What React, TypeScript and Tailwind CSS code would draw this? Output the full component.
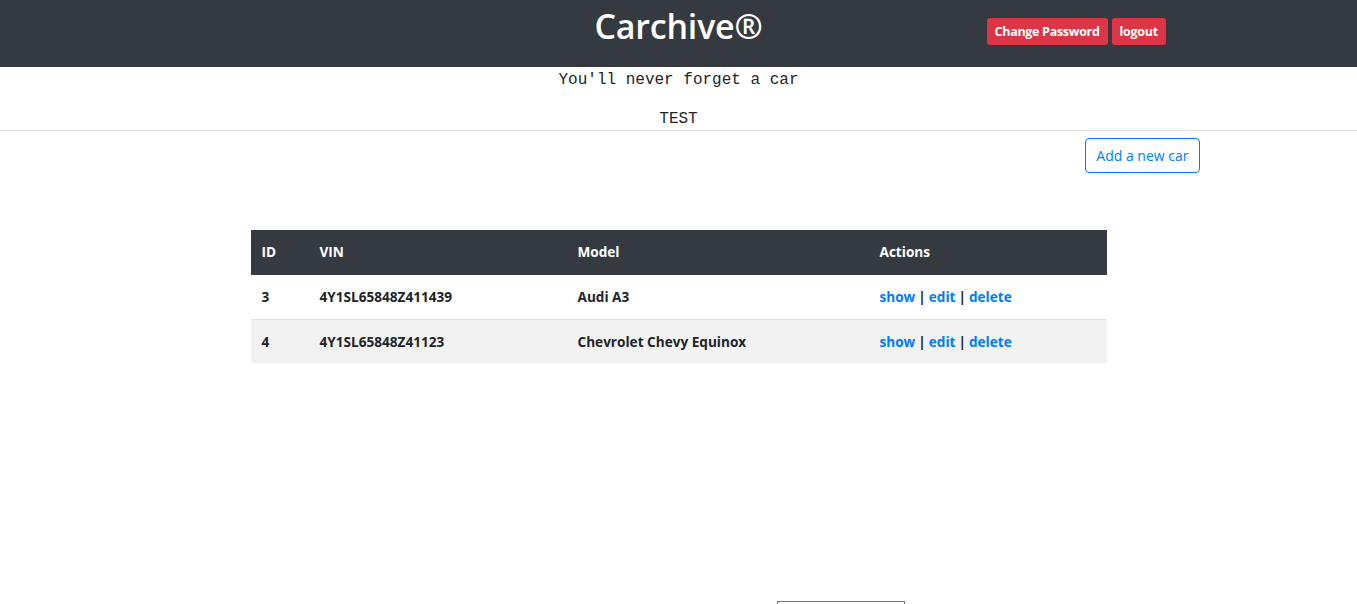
const cars = [
  { id: 3, vin: "4Y1SL65848Z411439", model: "Audi A3" },
  { id: 4, vin: "4Y1SL65848Z41123", model: "Chevrolet Chevy Equinox" },
]

function App() {
  return (
    <div className="min-h-screen bg-white font-['Open_Sans',sans-serif] text-[#212529]">
      <header className="grid h-[67px] grid-cols-[1fr_auto_1fr] bg-[#343a40]">
        <div></div>
        <h1 className="pt-[1px] text-[34px] font-semibold leading-[50px] tracking-[-0.2px] text-white">Carchive®</h1>
        <div className="flex items-start gap-[4px] pl-[224px] pt-[18px]">
          <button className="h-[27px] rounded-[3px] bg-[#dc3545] px-[8px] text-[12.5px] font-bold leading-[27px] tracking-[-0.3px] text-white">
            Change Password
          </button>
          <button className="h-[27px] rounded-[3px] bg-[#dc3545] px-[8px] text-[12.5px] font-bold leading-[27px] tracking-[-0.3px] text-white">
            logout
          </button>
        </div>
      </header>

      <div className="border-b border-[#dee2e6] pb-[1px] text-center font-['Liberation_Mono',monospace] text-[16px] text-[#212529]">
        <p className="pt-[3px] leading-[20px]">You'll never forget a car</p>
        <p className="mt-[19px] leading-[20px]">TEST</p>
      </div>

      <div className="mx-auto w-[856px]">
        <div className="flex justify-end pt-[7px]">
          <button className="-mr-[93px] h-[35px] rounded-[4px] border border-[#007bff] px-[10px] text-[14px] text-[#007bff]">
            Add a new car
          </button>
        </div>

        <table className="mt-[57px] w-full border-collapse text-left text-[13.6px] font-bold">
          <thead>
            <tr className="h-[45px] bg-[#343a40] text-white">
              <th className="w-[58px] pl-[11px]">ID</th>
              <th className="w-[258px] pl-[11px]">VIN</th>
              <th className="w-[302px] pl-[11px]">Model</th>
              <th className="pl-[11px]">Actions</th>
            </tr>
          </thead>
          <tbody>
            {cars.map((car, i) => (
              <tr
                key={car.id}
                className={i % 2 === 1 ? "h-[44px] border-t border-[#dee2e6] bg-[#f2f2f2]" : "h-[44px] bg-white"}
              >
                <td className="pl-[11px] pt-[1px]">{car.id}</td>
                <td className="pl-[11px] pt-[1px]">{car.vin}</td>
                <td className="pl-[11px] pt-[1px]">{car.model}</td>
                <td className="pl-[11px] pt-[1px]">
                  <a href="#" className="text-[#007bff]">show</a>
                  <span className="mx-[3px]">|</span>
                  <a href="#" className="text-[#007bff]">edit</a>
                  <span className="mx-[3px]">|</span>
                  <a href="#" className="text-[#007bff]">delete</a>
                </td>
              </tr>
            ))}
          </tbody>
        </table>
      </div>

      <div className="mt-[238px] pl-[777px]">
        <div className="h-[20px] w-[128px] border border-[#767676]"></div>
      </div>
    </div>
  )
}

export default App
